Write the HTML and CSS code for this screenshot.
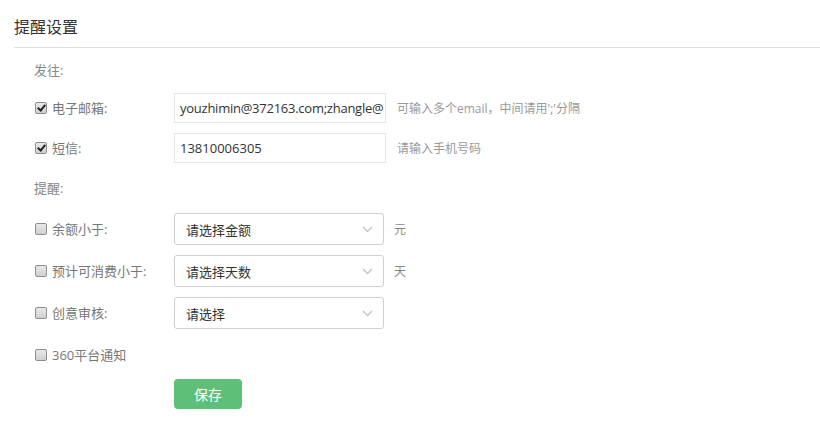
FILE: index.html
```html
<!DOCTYPE html>
<html lang="zh-CN">
<head>
<meta charset="utf-8">
<title>提醒设置</title>
<link rel="stylesheet" href="styles.css">
</head>
<body>
<div class="page">
  <h2 class="title">提醒设置</h2>
  <div class="form">
    <div class="section">发往:</div>
    <div class="row row-email">
      <label class="lbl"><span class="cb checked"></span>电子邮箱:</label>
      <div class="input input-email">youzhimin@372163.com;zhangle@</div>
      <span class="hint">可输入多个email，中间请用';'分隔</span>
    </div>
    <div class="row row-sms">
      <label class="lbl"><span class="cb checked"></span>短信:</label>
      <div class="input">13810006305</div>
      <span class="hint">请输入手机号码</span>
    </div>
    <div class="section section-remind">提醒:</div>
    <div class="row row-sel1">
      <label class="lbl"><span class="cb"></span>余额小于:</label>
      <div class="select"><span>请选择金额</span><svg class="chev" width="11" height="7" viewBox="0 0 11 7"><path d="M1 1l4.5 4.5L10 1" fill="none" stroke="#c4c4c4" stroke-width="1.4"/></svg></div>
      <span class="unit">元</span>
    </div>
    <div class="row row-sel">
      <label class="lbl"><span class="cb"></span>预计可消费小于:</label>
      <div class="select"><span>请选择天数</span><svg class="chev" width="11" height="7" viewBox="0 0 11 7"><path d="M1 1l4.5 4.5L10 1" fill="none" stroke="#c4c4c4" stroke-width="1.4"/></svg></div>
      <span class="unit">天</span>
    </div>
    <div class="row row-sel">
      <label class="lbl"><span class="cb"></span>创意审核:</label>
      <div class="select"><span>请选择</span><svg class="chev" width="11" height="7" viewBox="0 0 11 7"><path d="M1 1l4.5 4.5L10 1" fill="none" stroke="#c4c4c4" stroke-width="1.4"/></svg></div>
    </div>
    <div class="row row-notice">
      <label class="lbl"><span class="cb"></span>360平台通知</label>
    </div>
    <div class="actions">
      <button class="btn" type="button">保存</button>
    </div>
  </div>
</div>
</body>
</html>
```

FILE: styles.css
```css
html, body {
  margin: 0;
  padding: 0;
  background: #fff;
}
body {
  font-family: "Open Sans", "Noto Sans CJK SC", sans-serif;
  font-size: 13px;
  color: #333;
}
.page {
  width: 820px;
}
.title {
  margin: 0 0 0 14px;
  padding: 17px 0 10px;
  height: 20px;
  line-height: 20px;
  font-size: 16px;
  font-weight: normal;
  color: #333;
  border-bottom: 1px solid #e0e0e0;
}
.form {
  display: flex;
  flex-direction: column;
  padding-left: 34px;
}
.section {
  height: 20px;
  line-height: 20px;
  margin-top: 12px;
  color: #888;
}
.section-remind {
  margin-top: 15px;
}
.row {
  display: flex;
  align-items: center;
  margin-top: 10px;
}
.row-email {
  margin-top: 13px;
}
.row-sel1 {
  margin-top: 15px;
}
.row-notice {
  margin-top: 16px;
  height: 20px;
}
.lbl {
  width: 140px;
  flex: none;
  display: flex;
  align-items: center;
  color: #777;
  line-height: 20px;
}
.cb {
  width: 10px;
  height: 10px;
  margin: 0 5px 0 1px;
  border: 1px solid #8e8e8e;
  border-radius: 2px;
  background: linear-gradient(#e8e8e8, #d0d0d0);
  position: relative;
  flex: none;
}
.cb.checked::after {
  content: "";
  position: absolute;
  left: 3px;
  top: 0px;
  width: 3px;
  height: 6px;
  border: solid #222;
  border-width: 0 2px 2px 0;
  transform: rotate(40deg);
}
.input {
  box-sizing: border-box;
  width: 212px;
  height: 30px;
  line-height: 28px;
  padding-left: 5px;
  border: 1px solid #e6e6e6;
  white-space: nowrap;
  overflow: hidden;
  color: #333;
  flex: none;
}
.input-email {
  letter-spacing: -0.25px;
}
.hint {
  margin-left: 11px;
  font-size: 12px;
  color: #999;
}
.select {
  box-sizing: border-box;
  width: 210px;
  height: 32px;
  border: 1px solid #d0d0d0;
  border-radius: 3px;
  display: flex;
  align-items: center;
  justify-content: space-between;
  padding: 0 10px 0 11px;
  color: #333;
  flex: none;
}
.chev {
  display: block;
}
.unit {
  margin-left: 10px;
  font-size: 12px;
  color: #888;
}
.actions {
  margin-top: 14px;
  padding-left: 140px;
}
.btn {
  width: 68px;
  height: 30px;
  border: 0;
  border-radius: 4px;
  background: #5fbf78;
  color: #fff;
  font-family: "Noto Sans CJK SC", sans-serif;
  font-size: 14px;
  padding: 0;
  cursor: pointer;
}
```
